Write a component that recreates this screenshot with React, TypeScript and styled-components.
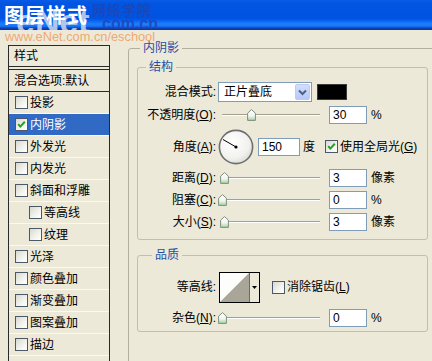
import React from "react";
import styled, { createGlobalStyle } from "styled-components";

const GlobalStyle = createGlobalStyle`
  html, body { margin: 0; padding: 0; }
  body {
    width: 432px; height: 361px; overflow: hidden;
    background: #ece9d8;
    font-family: "Liberation Sans", "Noto Sans CJK SC", sans-serif;
    font-size: 12px; color: #000;
  }
  #root { width: 432px; height: 361px; overflow: hidden; position: relative; }
`;

const TitleBar = styled.div`
  position: relative;
  height: 30px;
  overflow: hidden;
  background: linear-gradient(
    to bottom,
    #0a5ce6 0%, #0055e2 10%, #0053e0 62%, #0b64f2 70%,
    #1f80ff 80%, #1670f4 88%, #0c45c0 93%, #17338a 100%
  );
`;

const TitleText = styled.div`
  position: absolute;
  left: 4px; top: 2px;
  font-family: "Noto Sans CJK SC", sans-serif;
  font-weight: 700;
  font-size: 20px;
  line-height: 26px;
  letter-spacing: 1px;
  color: #fff;
  z-index: 2;
`;

const WmBig = styled.div`
  position: absolute;
  left: 16px; top: 4px;
  font-family: "Liberation Sans", sans-serif;
  font-weight: 700;
  font-size: 34px;
  line-height: 34px;
  color: rgba(196, 212, 240, 0.88);
  z-index: 1;
`;

const WmCn = styled.div`
  position: absolute;
  left: 92px; top: 1px;
  font-family: "Noto Sans CJK SC", sans-serif;
  font-weight: 700;
  font-size: 14px;
  line-height: 16px;
  letter-spacing: 1px;
  color: rgba(30, 70, 180, 0.8);
`;

const WmCom = styled.div`
  position: absolute;
  left: 102px; top: 16px;
  font-family: "Liberation Sans", sans-serif;
  font-weight: 700;
  font-size: 16px;
  line-height: 16px;
  color: rgba(30, 70, 180, 0.85);
`;

const WmUrl = styled.div`
  position: absolute;
  left: 5px; top: 30px;
  font-family: "Liberation Sans", sans-serif;
  font-size: 12.8px;
  line-height: 14px;
  color: rgba(240, 150, 85, 0.8);
  z-index: 3;
`;

const Body = styled.div`
  display: flex;
  align-items: flex-start;
  gap: 18px;
  padding-left: 8px;
`;

const StyleList = styled.div`
  width: 102px;
  height: 330px;
  box-sizing: border-box;
  border: 1px solid #2a2a2a;
  margin-top: 15px;
  flex: none;
  display: flex;
  flex-direction: column;
`;

const ListHeader = styled.div`
  height: 20px;
  border-bottom: 1px solid #2a2a2a;
  margin-bottom: 2px;
  padding-left: 5px;
  display: flex;
  align-items: center;
  line-height: 14px;
`;

const OptionsRow = styled.div`
  height: 21px;
  border-top: 1px solid #2a2a2a;
  border-bottom: 1px solid #2a2a2a;
  padding-left: 5px;
  display: flex;
  align-items: center;
  line-height: 14px;
`;

const ListItem = styled.div<{ $indent?: boolean; $selected?: boolean }>`
  height: 21px;
  flex: none;
  border-bottom: 1px solid #faf9f3;
  padding-left: ${(p) => (p.$indent ? 20 : 6)}px;
  display: flex;
  align-items: center;
  gap: 2px;
  line-height: 14px;
  background: ${(p) => (p.$selected ? "#316ac5" : "transparent")};
  color: ${(p) => (p.$selected ? "#fff" : "#000")};
`;

const CheckBox = styled.span`
  display: inline-flex;
  flex: none;
  width: 13px;
  height: 13px;
  box-sizing: border-box;
  border: 1px solid #4a5868;
  background: linear-gradient(135deg, #d8d8d0 0%, #f4f4ef 60%, #ffffff 100%);
  align-items: center;
  justify-content: center;
`;

const OuterGroup = styled.fieldset`
  margin: 11px 0 0 0;
  padding: 5px 0 0 8px;
  border: 1px solid #b2af9f;
  border-radius: 3px;
  width: 330px;
  height: 340px;
  box-sizing: border-box;
  flex: none;
  min-width: 0;
`;

const Legend = styled.legend<{ $ml: number }>`
  padding: 0 3px;
  margin-left: ${(p) => p.$ml}px;
  line-height: 14px;
  height: 14px;
  color: #1f4fa8;
`;

const InnerGroup = styled.fieldset<{ $mt: number; $pt: number; $pb: number }>`
  margin: ${(p) => p.$mt}px 0 0 0;
  padding: ${(p) => p.$pt}px 0 ${(p) => p.$pb}px 0;
  border: 1px solid #c2bfae;
  border-radius: 3px;
  width: 291px;
  box-sizing: border-box;
  min-width: 0;
`;

const Row = styled.div<{ $h: number }>`
  display: flex;
  align-items: center;
  height: ${(p) => p.$h}px;
`;

const Label = styled.span`
  width: 78px;
  flex: none;
  text-align: right;
  white-space: nowrap;
  line-height: 14px;
`;

const Select = styled.div`
  margin-left: 2px;
  width: 94px;
  height: 20px;
  box-sizing: border-box;
  border: 1px solid #7f9db9;
  background: #fff;
  display: flex;
  align-items: center;
  padding-left: 5px;
  line-height: 14px;
`;

const SelectText = styled.span`
  flex: 1;
`;

const DropButton = styled.span`
  width: 15px;
  height: 16px;
  margin-right: 1px;
  box-sizing: border-box;
  border: 1px solid #bccbf0;
  border-radius: 2px;
  background: linear-gradient(to bottom, #d2defd, #b6c9f7);
  display: flex;
  align-items: center;
  justify-content: center;
`;

const Swatch = styled.span`
  margin-left: 5px;
  width: 30px;
  height: 16px;
  box-sizing: border-box;
  border: 1px solid #3a3a3a;
  background: #000;
`;

const SliderTrack = styled.div`
  position: relative;
  width: 102px;
  height: 14px;
  margin-left: 2px;
  flex: none;
  &::before {
    content: "";
    position: absolute;
    left: 4px;
    right: 0;
    top: 6px;
    border-top: 1px solid #a3a08f;
    border-bottom: 1px solid #fff;
  }
`;

const ThumbSvg = styled.svg`
  position: absolute;
  top: 1px;
`;

const NumBox = styled.div<{ $w: number; $ml: number }>`
  margin-left: ${(p) => p.$ml}px;
  width: ${(p) => p.$w}px;
  height: 18px;
  box-sizing: border-box;
  border: 1px solid #7f9db9;
  background: #fff;
  padding-left: 3px;
  font-family: "Liberation Sans", sans-serif;
  font-size: 12px;
  line-height: 16px;
  flex: none;
`;

const Unit = styled.span<{ $ml?: number }>`
  margin-left: ${(p) => p.$ml ?? 4}px;
  line-height: 14px;
  white-space: nowrap;
`;

const DialSvg = styled.svg`
  margin-left: 2px;
  flex: none;
`;

const CheckLabel = styled.span<{ $ml: number }>`
  margin-left: ${(p) => p.$ml}px;
  display: flex;
  align-items: center;
  gap: 2px;
  line-height: 14px;
  white-space: nowrap;
`;

const ContourBox = styled.div`
  margin-left: 3px;
  width: 41px;
  height: 31px;
  box-sizing: border-box;
  border: 1px solid #000;
  display: flex;
  background: #ece9d8;
  flex: none;
`;

const ContourArrow = styled.div`
  flex: 1;
  border-left: 1px solid #6b6b6b;
  display: flex;
  align-items: center;
  justify-content: center;
`;

const Check = ({ checked }: { checked?: boolean }) => (
  <CheckBox>
    {checked && (
      <svg width="11" height="11" viewBox="0 0 11 11">
        <path d="M2.2 5.2 L4.3 7.6 L8.8 2.8" fill="none" stroke="#21a121" strokeWidth="2" />
      </svg>
    )}
  </CheckBox>
);

const Slider = ({ value }: { value: number }) => {
  const center = 4 + value * 0.97;
  return (
    <SliderTrack>
      <ThumbSvg width="9" height="12" viewBox="0 0 9 12" style={{ left: center - 4.5 }}>
        <defs>
          <linearGradient id="tg" x1="0" y1="0" x2="0" y2="1">
            <stop offset="0" stopColor="#ffffff" />
            <stop offset="0.6" stopColor="#f0f4ee" />
            <stop offset="1" stopColor="#9fd29a" />
          </linearGradient>
        </defs>
        <path d="M4.5 0.6 L8.4 4.2 L8.4 11.4 L0.6 11.4 L0.6 4.2 Z" fill="url(#tg)" stroke="#7f8f80" strokeWidth="1" />
      </ThumbSvg>
    </SliderTrack>
  );
};

const Dial = ({ angle }: { angle: number }) => {
  const r = 15;
  const rad = (angle * Math.PI) / 180;
  const x2 = 18 + Math.cos(rad) * r;
  const y2 = 18 - Math.sin(rad) * r;
  return (
    <DialSvg width="36" height="36" viewBox="0 0 36 36">
      <defs>
        <radialGradient id="dg" cx="0.4" cy="0.35" r="0.7">
          <stop offset="0" stopColor="#ffffff" />
          <stop offset="0.7" stopColor="#f1f1ee" />
          <stop offset="1" stopColor="#d9d9d4" />
        </radialGradient>
      </defs>
      <circle cx="18" cy="18" r="16.6" fill="url(#dg)" stroke="#6f6f6f" strokeWidth="1.6" />
      <line x1="18" y1="18" x2={x2} y2={y2} stroke="#000" strokeWidth="1" />
      <circle cx="18" cy="18" r="1.6" fill="#000" />
    </DialSvg>
  );
};

const listItems: { label: string; indent?: boolean; checked?: boolean; selected?: boolean }[] = [
  { label: "投影" },
  { label: "内阴影", checked: true, selected: true },
  { label: "外发光" },
  { label: "内发光" },
  { label: "斜面和浮雕" },
  { label: "等高线", indent: true },
  { label: "纹理", indent: true },
  { label: "光泽" },
  { label: "颜色叠加" },
  { label: "渐变叠加" },
  { label: "图案叠加" },
  { label: "描边" },
];

export default function App() {
  return (
    <>
      <GlobalStyle />
      <TitleBar>
        <WmBig>eNet</WmBig>
        <WmCn>网络学院</WmCn>
        <WmCom>com.cn</WmCom>
        <TitleText>图层样式</TitleText>
      </TitleBar>
      <WmUrl>www.eNet.com.cn/eschool</WmUrl>
      <Body>
        <StyleList>
          <ListHeader>样式</ListHeader>
          <OptionsRow>混合选项:默认</OptionsRow>
          {listItems.map((it) => (
            <ListItem key={it.label} $indent={it.indent} $selected={it.selected}>
              <Check checked={it.checked} />
              <span>{it.label}</span>
            </ListItem>
          ))}
        </StyleList>

        <OuterGroup>
          <Legend $ml={3}>内阴影</Legend>
          <InnerGroup $mt={0} $pt={6} $pb={6}>
            <Legend $ml={8}>结构</Legend>
            <Row $h={24}>
              <Label>混合模式:</Label>
              <Select>
                <SelectText>正片叠底</SelectText>
                <DropButton>
                  <svg width="9" height="7" viewBox="0 0 9 7">
                    <path d="M1 1.5 L4.5 5 L8 1.5" fill="none" stroke="#4d6185" strokeWidth="2" />
                  </svg>
                </DropButton>
              </Select>
              <Swatch />
            </Row>
            <Row $h={22}>
              <Label>
                不透明度(<u>O</u>):
              </Label>
              <Slider value={30} />
              <NumBox $w={38} $ml={9}>30</NumBox>
              <Unit>%</Unit>
            </Row>
            <Row $h={41}>
              <Label>
                角度(<u>A</u>):
              </Label>
              <Dial angle={150} />
              <NumBox $w={42} $ml={4}>150</NumBox>
              <Unit $ml={3}>度</Unit>
              <CheckLabel $ml={10}>
                <Check checked />
                <span>
                  使用全局光(<u>G</u>)
                </span>
              </CheckLabel>
            </Row>
            <Row $h={22}>
              <Label>
                距离(<u>D</u>):
              </Label>
              <Slider value={3} />
              <NumBox $w={38} $ml={9}>3</NumBox>
              <Unit>像素</Unit>
            </Row>
            <Row $h={22}>
              <Label>
                阻塞(<u>C</u>):
              </Label>
              <Slider value={0} />
              <NumBox $w={38} $ml={9}>0</NumBox>
              <Unit>%</Unit>
            </Row>
            <Row $h={22}>
              <Label>
                大小(<u>S</u>):
              </Label>
              <Slider value={3} />
              <NumBox $w={38} $ml={9}>3</NumBox>
              <Unit>像素</Unit>
            </Row>
          </InnerGroup>

          <InnerGroup $mt={8} $pt={7} $pb={0}>
            <Legend $ml={14}>品质</Legend>
            <Row $h={36}>
              <Label>等高线:</Label>
              <ContourBox>
                <svg width="29" height="29" viewBox="0 0 29 29">
                  <rect x="0" y="0" width="29" height="29" fill="#fdfdfc" />
                  <polygon points="0,29 29,0 29,29" fill="#a9a598" />
                </svg>
                <ContourArrow>
                  <svg width="5" height="3" viewBox="0 0 5 3">
                    <polygon points="0,0 5,0 2.5,3" fill="#000" />
                  </svg>
                </ContourArrow>
              </ContourBox>
              <CheckLabel $ml={12}>
                <Check />
                <span>
                  消除锯齿(<u>L</u>)
                </span>
              </CheckLabel>
            </Row>
            <Row $h={26}>
              <Label>
                杂色(<u>N</u>):
              </Label>
              <Slider value={0} />
              <NumBox $w={38} $ml={9}>0</NumBox>
              <Unit>%</Unit>
            </Row>
          </InnerGroup>
        </OuterGroup>
      </Body>
    </>
  );
}
